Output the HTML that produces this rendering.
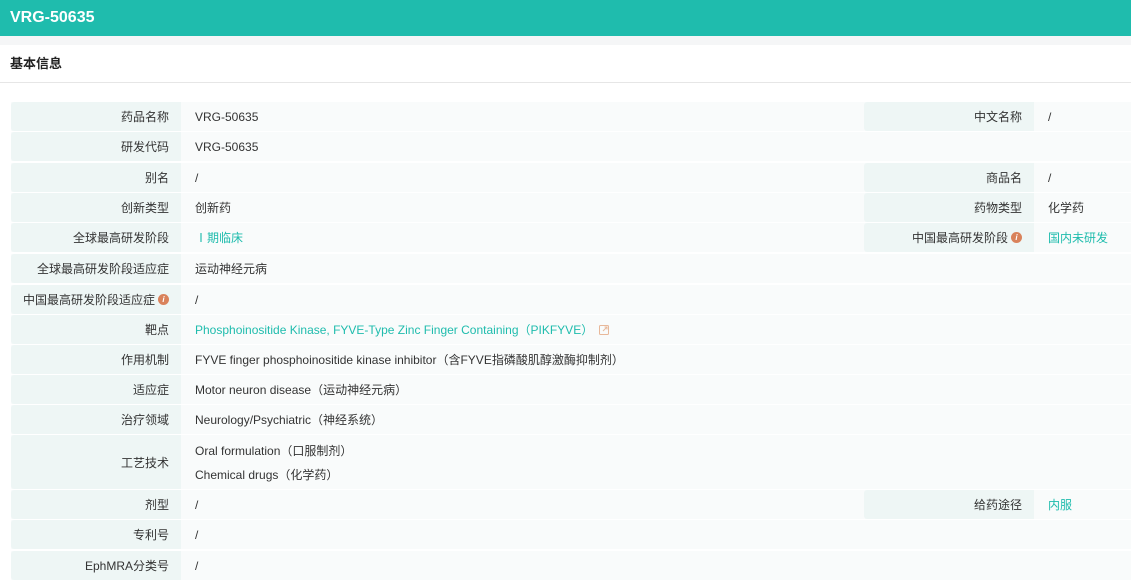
<!DOCTYPE html><html><head><meta charset="utf-8"><style>
*{margin:0;padding:0;box-sizing:border-box}
body{width:1131px;height:588px;overflow:hidden;background:#fff;font-family:"Liberation Sans","Noto Sans CJK SC",sans-serif;font-size:12px;color:#333;position:relative}
.hd{position:absolute;left:0;top:0;width:1131px;height:36px;background:#1fbcad;color:#fff;font-weight:bold;font-size:16px;line-height:36px;padding-left:10px}
.gs{position:absolute;left:0;top:36px;width:1131px;height:9px;background:#f5f6f7}
.st{position:absolute;left:0;top:45px;width:1131px;height:38px;border-bottom:1px solid #e6e6e6;font-weight:bold;font-size:13px;line-height:37px;padding-left:10px;color:#222}
.r{position:absolute;left:11px;width:1120px;background:#f9fbfb}
.l{position:absolute;top:0;bottom:0;width:170px;background:#eef6f5;border-radius:3px 0 0 3px;text-align:right;padding-right:12px;display:flex;align-items:center;justify-content:flex-end}
.v{position:absolute;top:0;bottom:0;display:flex;align-items:center}
.t{color:#1fbcad}
.i{display:inline-block;width:11px;height:11px;border-radius:50%;background:#d9825b;color:#fff;font-size:8px;line-height:11px;text-align:center;font-style:italic;font-weight:bold;margin-left:3px}
</style></head><body>
<div class="hd">VRG-50635</div><div class="gs"></div>
<div class="st">基本信息</div>

<div class="r" style="top:102px;height:29px"><div class="l" style="left:0">药品名称</div><div class="v" style="left:184px">VRG-50635</div><div class="l" style="left:853px;width:170px">中文名称</div><div class="v" style="left:1037px">/</div></div>
<div class="r" style="top:132px;height:29px"><div class="l" style="left:0">研发代码</div><div class="v" style="left:184px">VRG-50635</div></div>
<div class="r" style="top:163px;height:29px"><div class="l" style="left:0">别名</div><div class="v" style="left:184px">/</div><div class="l" style="left:853px">商品名</div><div class="v" style="left:1037px">/</div></div>
<div class="r" style="top:193px;height:29px"><div class="l" style="left:0">创新类型</div><div class="v" style="left:184px">创新药</div><div class="l" style="left:853px">药物类型</div><div class="v" style="left:1037px">化学药</div></div>
<div class="r" style="top:223px;height:29px"><div class="l" style="left:0">全球最高研发阶段</div><div class="v t" style="left:184px">Ⅰ期临床</div><div class="l" style="left:853px">中国最高研发阶段<span class="i">i</span></div><div class="v t" style="left:1037px">国内未研发</div></div>
<div class="r" style="top:254px;height:29px"><div class="l" style="left:0">全球最高研发阶段适应症</div><div class="v" style="left:184px">运动神经元病</div></div>
<div class="r" style="top:285px;height:29px"><div class="l" style="left:0">中国最高研发阶段适应症<span class="i">i</span></div><div class="v" style="left:184px">/</div></div>
<div class="r" style="top:315px;height:29px"><div class="l" style="left:0">靶点</div><div class="v t" style="left:184px">Phosphoinositide Kinase, FYVE-Type Zinc Finger Containing（PIKFYVE）<svg width="10" height="10" viewBox="0 0 10 10" style="margin-left:6px"><rect x="0.5" y="0.5" width="9" height="9" rx="1" fill="none" stroke="#e8b89a"/><path d="M4 6L8 2M5.5 2H8V4.5" fill="none" stroke="#e8b89a"/></svg></div></div>
<div class="r" style="top:345px;height:29px"><div class="l" style="left:0">作用机制</div><div class="v" style="left:184px">FYVE finger phosphoinositide kinase inhibitor（含FYVE指磷酸肌醇激酶抑制剂）</div></div>
<div class="r" style="top:375px;height:29px"><div class="l" style="left:0">适应症</div><div class="v" style="left:184px">Motor neuron disease（运动神经元病）</div></div>
<div class="r" style="top:405px;height:29px"><div class="l" style="left:0">治疗领域</div><div class="v" style="left:184px">Neurology/Psychiatric（神经系统）</div></div>
<div class="r" style="top:435px;height:54px"><div class="l" style="left:0">工艺技术</div><div style="position:absolute;left:184px;top:4px;line-height:24px">Oral formulation（口服制剂）<br>Chemical drugs（化学药）</div></div>
<div class="r" style="top:490px;height:29px"><div class="l" style="left:0">剂型</div><div class="v" style="left:184px">/</div><div class="l" style="left:853px">给药途径</div><div class="v t" style="left:1037px">内服</div></div>
<div class="r" style="top:520px;height:29px"><div class="l" style="left:0">专利号</div><div class="v" style="left:184px">/</div></div>
<div class="r" style="top:551px;height:29px"><div class="l" style="left:0">EphMRA分类号</div><div class="v" style="left:184px">/</div></div>
</body></html>
